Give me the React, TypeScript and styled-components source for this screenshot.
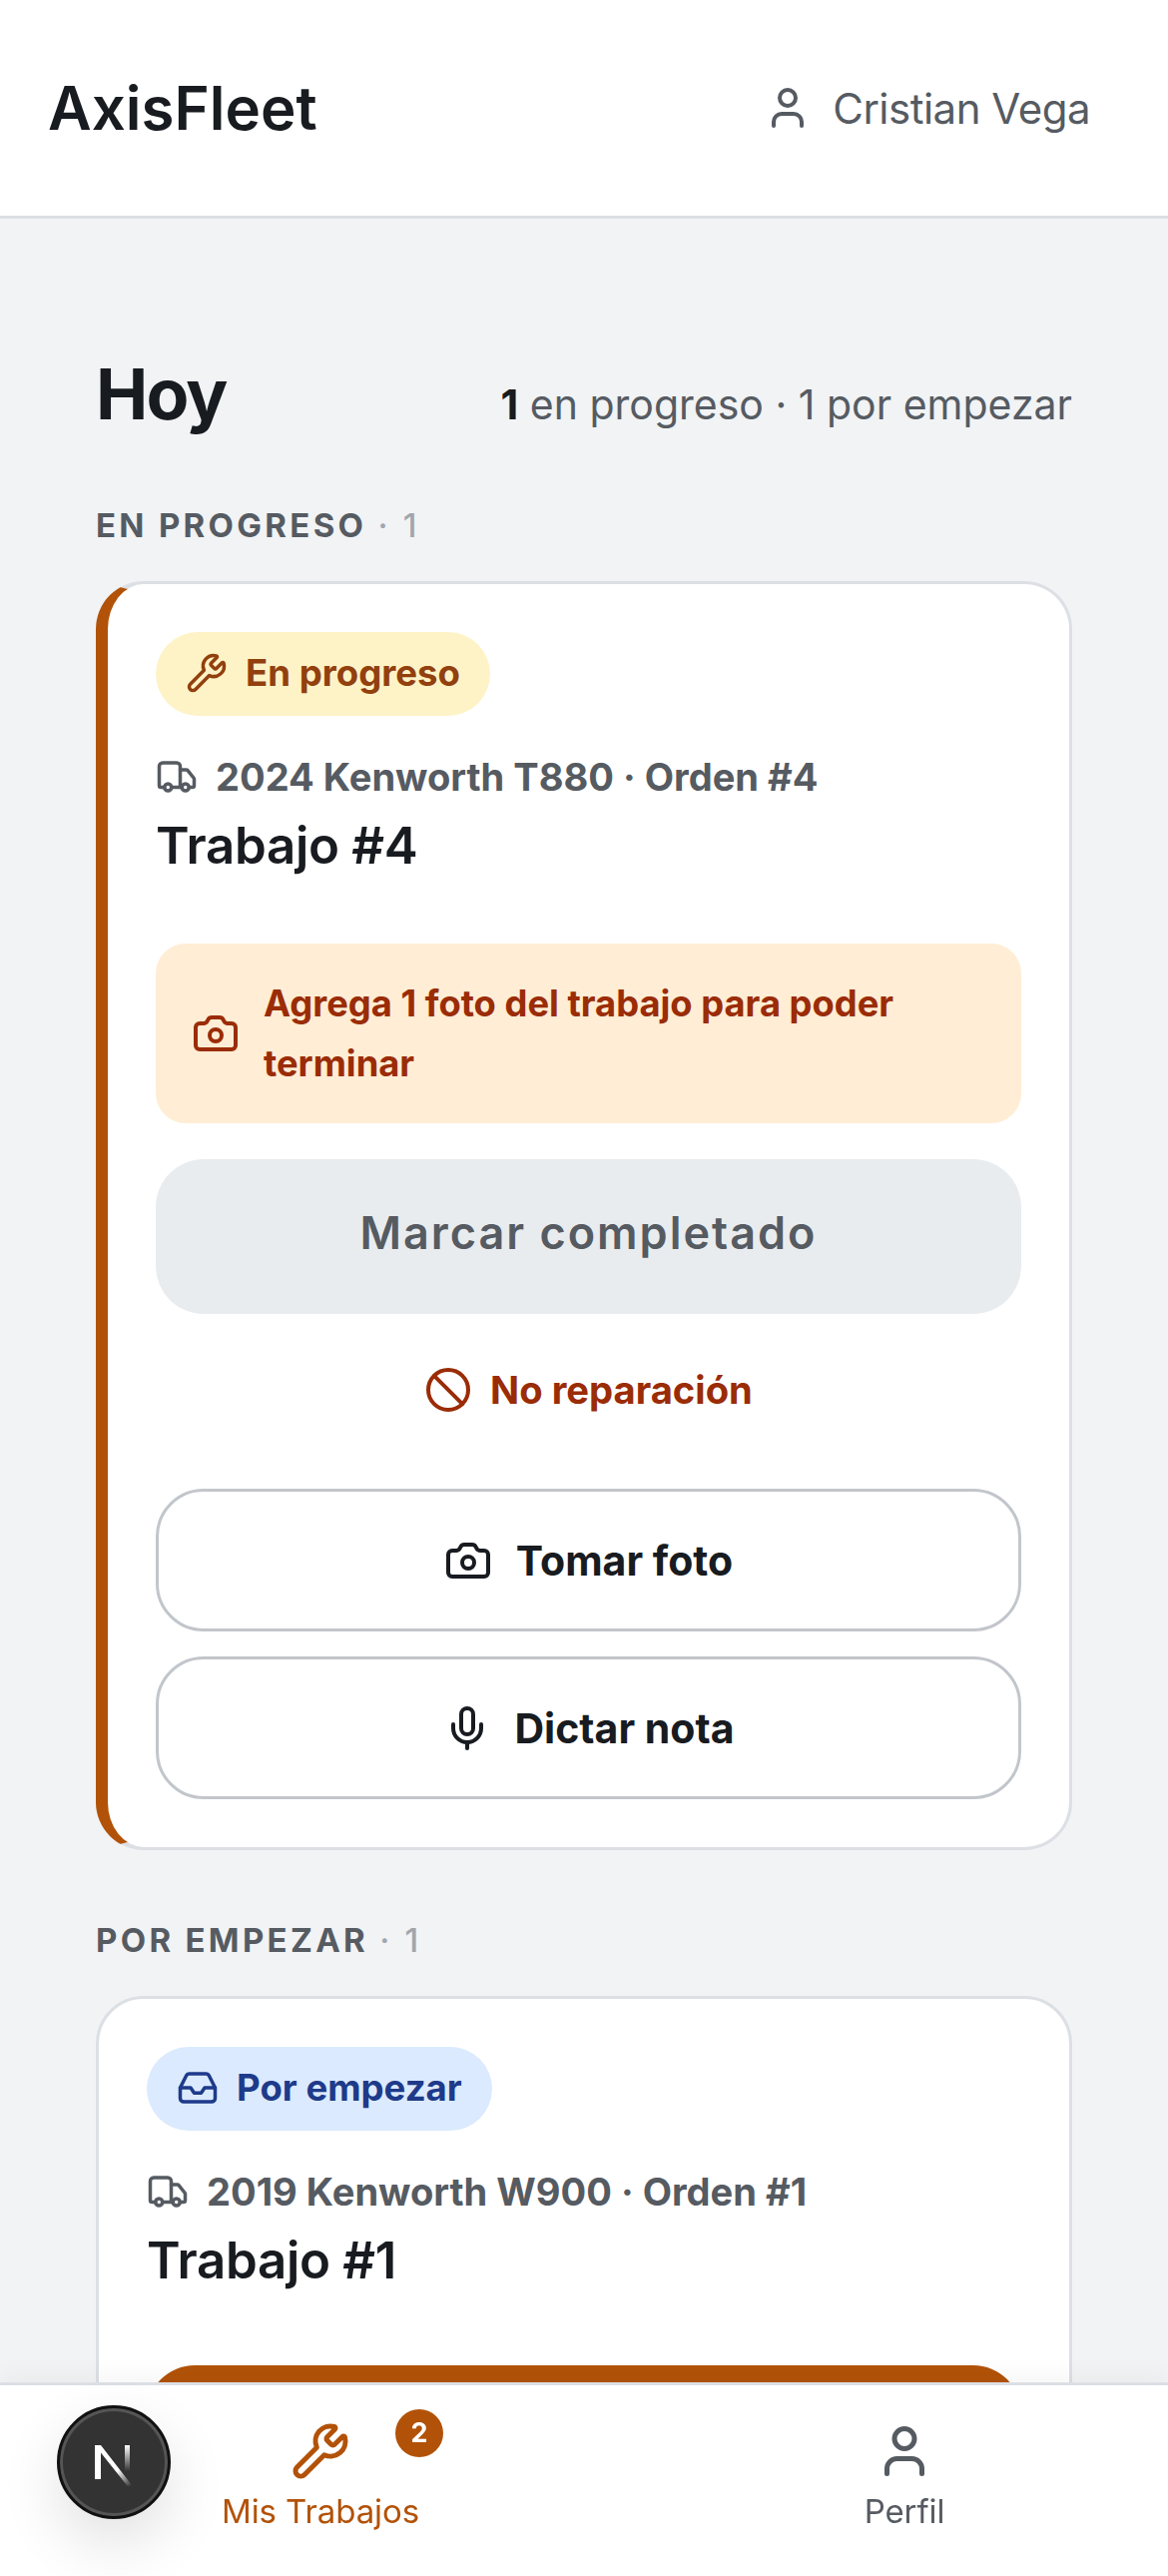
import React from "react";
import styled, { createGlobalStyle } from "styled-components";
import { Ban, Camera, Inbox, Mic, Truck, User, Wrench } from "lucide-react";

const GlobalStyle = createGlobalStyle`
  html, body {
    margin: 0;
    padding: 0;
    background: #f1f3f5;
    font-family: Inter, "Noto Sans", sans-serif;
    color: #181b20;
  }
  * { box-sizing: border-box; }
`;

const Page = styled.div`
  height: 2580px;
  overflow: hidden;
`;

const Header = styled.header`
  height: 219px;
  background: #fff;
  border-bottom: 3px solid #dcdfe4;
  padding: 0 48px;
  display: flex;
  align-items: center;
  justify-content: space-between;
`;

const Brand = styled.div`
  font-size: 60px;
  font-weight: 600;
`;

const UserChip = styled.div`
  display: flex;
  align-items: center;
  gap: 21px;
  padding-right: 30px;
  font-size: 42px;
  letter-spacing: -0.5px;
  color: #565b62;
`;

const Main = styled.main`
  padding: 133px 96px 0;
`;

const TodayRow = styled.div`
  display: flex;
  justify-content: space-between;
  align-items: baseline;
  height: 108px;
`;

const TodayTitle = styled.h1`
  margin: 0;
  font-size: 70px;
  font-weight: 700;
  letter-spacing: -1.8px;
`;

const Summary = styled.div`
  font-size: 41px;
  color: #565b62;

  strong {
    font-weight: 700;
    color: #181b20;
  }
`;

const SectionLabel = styled.div`
  margin-top: 42px;
  height: 48px;
  line-height: 48px;
  font-size: 33px;
  font-weight: 700;
  letter-spacing: 3.3px;
  color: #565b62;

  span {
    font-weight: 500;
    color: #a1a6ac;
  }
`;

const Card = styled.section<{ $accent?: boolean }>`
  margin-top: 32px;
  margin-bottom: ${(p) => (p.$accent ? "66px" : "0")};
  background: #fff;
  border: 3px solid #dcdfe4;
  border-left: ${(p) => (p.$accent ? "12px solid #b25208" : "3px solid #dcdfe4")};
  border-radius: 48px;
  padding: 48px;
  display: flex;
  flex-direction: column;
  align-items: stretch;
`;

const Pill = styled.div<{ $tone: "amber" | "blue" }>`
  align-self: flex-start;
  height: 84px;
  padding: 0 30px 3px;
  border-radius: 42px;
  display: flex;
  align-items: center;
  gap: 18px;
  font-size: 36.6px;
  font-weight: 700;
  background: ${(p) => (p.$tone === "amber" ? "#fef3c7" : "#dbeafe")};
  color: ${(p) => (p.$tone === "amber" ? "#92400e" : "#1e3a8a")};
`;

const Meta = styled.div`
  margin-top: 37px;
  display: flex;
  align-items: center;
  gap: 18px;
  font-size: 38.1px;
  line-height: 48px;
  font-weight: 700;
  color: #565b62;
`;

const JobTitle = styled.h2`
  margin: 12px 0 0;
  font-size: 51px;
  letter-spacing: -0.3px;
  line-height: 66px;
  font-weight: 600;
`;

const Alert = styled.div`
  margin-top: 65px;
  height: 180px;
  padding: 0 36px;
  border-radius: 30px;
  background: #ffedd5;
  display: flex;
  align-items: center;
  gap: 24px;
  font-size: 36.35px;
  line-height: 60px;
  font-weight: 700;
  color: #9a2c06;
`;

const CompleteButton = styled.div`
  margin-top: 36px;
  height: 155px;
  padding-bottom: 8px;
  border-radius: 48px;
  background: #e9ecef;
  display: flex;
  align-items: center;
  justify-content: center;
  font-size: 45px;
  font-weight: 600;
  letter-spacing: 2px;
  color: #565b62;
`;

const NoRepair = styled.div`
  margin-top: 31px;
  height: 90px;
  display: flex;
  align-items: center;
  justify-content: center;
  gap: 18px;
  font-size: 38.2px;
  font-weight: 700;
  color: #9a2c06;
`;

const ActionStack = styled.div`
  margin-top: 54px;
  display: flex;
  flex-direction: column;
  gap: 25px;
`;

const OutlineButton = styled.div`
  height: 143px;
  border: 3px solid #c2c6cb;
  border-radius: 48px;
  display: flex;
  align-items: center;
  justify-content: center;
  gap: 24px;
  font-size: 41px;
  font-weight: 700;
`;

const StartButton = styled.div`
  margin-top: 72px;
  height: 155px;
  border-radius: 48px;
  background: #b25208;
`;

const BottomNav = styled.nav`
  position: fixed;
  left: 0;
  right: 0;
  bottom: 0;
  height: 194px;
  background: #fff;
  border-top: 3px solid #dcdfe4;
  box-shadow: 0 -6px 24px rgba(0, 0, 0, 0.04);
  display: grid;
  grid-template-columns: 642px 528px;
`;

const NavItem = styled.div<{ $active?: boolean }>`
  position: relative;
  display: flex;
  flex-direction: column;
  align-items: center;
  padding-top: 36px;
  gap: 9px;
  font-size: 33px;
  letter-spacing: -0.1px;
  line-height: 42px;
  color: ${(p) => (p.$active ? "#b25208" : "#565b62")};
`;

const NavBadge = styled.span`
  position: absolute;
  top: 24px;
  left: 396px;
  width: 48px;
  height: 48px;
  border-radius: 50%;
  background: #b25208;
  color: #fff;
  font-size: 27px;
  font-weight: 700;
  display: flex;
  align-items: center;
  justify-content: center;
`;

const DevBadge = styled.div`
  position: fixed;
  left: 57px;
  top: 2409px;
  width: 114px;
  height: 114px;
  border-radius: 50%;
  background: #333;
  border: 3px solid #111;
  box-shadow: inset 0 0 0 3px #555, 0 24px 60px rgba(0, 0, 0, 0.12);
  display: flex;
  align-items: center;
  justify-content: center;
`;

const NextLogo = () => (
  <svg width="42" height="48" viewBox="0 0 42 48" fill="none">
    <defs>
      <linearGradient id="nextDiag" x1="6" y1="7" x2="38" y2="48" gradientUnits="userSpaceOnUse">
        <stop offset="0.6" stopColor="#fff" />
        <stop offset="1" stopColor="#fff" stopOpacity="0" />
      </linearGradient>
      <linearGradient id="nextBar" x1="34" y1="7" x2="34" y2="33" gradientUnits="userSpaceOnUse">
        <stop stopColor="#fff" />
        <stop offset="1" stopColor="#fff" stopOpacity="0" />
      </linearGradient>
    </defs>
    <path d="M2 7h6l31 40-3.5 2L8 14.5V41H2z" fill="url(#nextDiag)" />
    <rect x="32" y="7" width="5" height="26" fill="url(#nextBar)" />
  </svg>
);

export default function App() {
  return (
    <Page>
      <GlobalStyle />
      <Header>
        <Brand>AxisFleet</Brand>
        <UserChip>
          <User size={48} strokeWidth={2} />
          Cristian Vega
        </UserChip>
      </Header>
      <Main>
        <TodayRow>
          <TodayTitle>Hoy</TodayTitle>
          <Summary>
            <strong>1</strong> en progreso · 1 por empezar
          </Summary>
        </TodayRow>

        <SectionLabel>
          EN PROGRESO <span>· 1</span>
        </SectionLabel>
        <Card $accent>
          <Pill $tone="amber">
            <Wrench size={42} strokeWidth={2} />
            En progreso
          </Pill>
          <Meta>
            <Truck size={42} strokeWidth={2} />
            2024 Kenworth T880 · Orden #4
          </Meta>
          <JobTitle>Trabajo #4</JobTitle>
          <Alert>
            <Camera size={48} strokeWidth={2} style={{ flexShrink: 0 }} />
            Agrega 1 foto del trabajo para poder terminar
          </Alert>
          <CompleteButton>Marcar completado</CompleteButton>
          <NoRepair>
            <Ban size={48} strokeWidth={2} />
            No reparación
          </NoRepair>
          <ActionStack>
            <OutlineButton>
              <Camera size={48} strokeWidth={2} />
              Tomar foto
            </OutlineButton>
            <OutlineButton>
              <Mic size={48} strokeWidth={2} />
              Dictar nota
            </OutlineButton>
          </ActionStack>
        </Card>

        <SectionLabel>
          POR EMPEZAR <span>· 1</span>
        </SectionLabel>
        <Card>
          <Pill $tone="blue">
            <Inbox size={42} strokeWidth={2} />
            Por empezar
          </Pill>
          <Meta>
            <Truck size={42} strokeWidth={2} />
            2019 Kenworth W900 · Orden #1
          </Meta>
          <JobTitle>Trabajo #1</JobTitle>
          <StartButton />
        </Card>
      </Main>

      <BottomNav>
        <NavItem $active>
          <Wrench size={60} strokeWidth={2} />
          Mis Trabajos
          <NavBadge>2</NavBadge>
        </NavItem>
        <NavItem>
          <User size={60} strokeWidth={2} />
          Perfil
        </NavItem>
      </BottomNav>
      <DevBadge>
        <NextLogo />
      </DevBadge>
    </Page>
  );
}
